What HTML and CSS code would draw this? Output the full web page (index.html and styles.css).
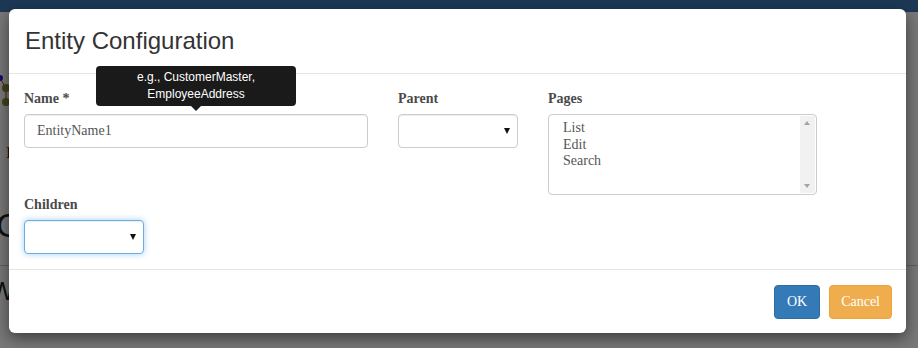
FILE: index.html
```html
<!DOCTYPE html>
<html lang="en">
<head>
    <meta charset="UTF-8">
    <title>Entity Configuration</title>
    <link rel="stylesheet" href="styles.css">
</head>
<body>
    <div class="page">
        <div class="navbar"></div>
        <div class="page-content">
            <svg class="graph" width="20" height="40" viewBox="0 0 20 40">
                <line x1="0" y1="12" x2="6" y2="22" stroke="#c33" stroke-width="1"/>
                <line x1="6" y1="22" x2="6" y2="36" stroke="#c33" stroke-width="1"/>
                <circle cx="0" cy="12" r="3" fill="#22d"/>
                <circle cx="6" cy="22" r="4" fill="#8a8a3a"/>
                <circle cx="6" cy="36" r="4" fill="#8a8a3a"/>
            </svg>
            <p class="bg-letter">I</p>
            <h2 class="bg-heading">C</h2>
            <hr class="bg-rule">
            <h2 class="bg-heading small">W</h2>
        </div>
    </div>

    <div class="backdrop"></div>

    <div class="modal">
        <div class="modal-header">
            <h4 class="modal-title">Entity Configuration</h4>
        </div>

        <div class="modal-body">
            <div class="form-grid">
                <div class="form-group">
                    <label class="control-label">Name *</label>
                    <div class="tooltip-anchor">
                        <input class="form-control" type="text" value="EntityName1">
                        <div class="tooltip">e.g., CustomerMaster,<br>EmployeeAddress</div>
                    </div>
                </div>

                <div class="form-group">
                    <label class="control-label">Parent</label>
                    <div class="select-wrap">
                        <select class="form-control"></select>
                    </div>
                </div>

                <div class="form-group">
                    <label class="control-label">Pages</label>
                    <div class="listbox">
                        <div class="listbox-items">
                            <div>List</div>
                            <div>Edit</div>
                            <div>Search</div>
                        </div>
                        <div class="scrollbar">
                            <span class="arrow-up"></span>
                            <span class="arrow-down"></span>
                        </div>
                    </div>
                </div>

                <div class="form-group">
                    <label class="control-label">Children</label>
                    <div class="select-wrap narrow">
                        <select class="form-control focused"></select>
                    </div>
                </div>
            </div>
        </div>

        <div class="modal-footer">
            <button class="btn btn-primary">OK</button>
            <button class="btn btn-warning">Cancel</button>
        </div>
    </div>
</body>
</html>
```

FILE: styles.css
```css
* {
    margin: 0;
    padding: 0;
    box-sizing: border-box;
}

body {
    width: 918px;
    height: 348px;
    overflow: hidden;
    background: #fff;
    font-family: "Liberation Serif", serif;
    font-size: 14px;
    color: #555;
    position: relative;
}

/* page behind the dialog */
.navbar {
    height: 12px;
    background: #3e78b6;
}

.page-content {
    padding-top: 54px;
}

.graph {
    display: block;
}

.bg-letter {
    font-size: 16px;
    color: #222;
    margin-top: 38px;
    padding-left: 6px;
}

.bg-heading {
    font-family: "Liberation Sans", sans-serif;
    font-weight: 400;
    font-size: 34px;
    color: #222;
    margin-top: 44px;
    margin-left: -4px;
}

.bg-heading.small {
    font-size: 26px;
    margin-top: 10px;
    margin-left: -10px;
}

.bg-rule {
    border: none;
    border-top: 1px solid #ccc;
    margin-top: 20px;
}

.backdrop {
    position: absolute;
    inset: 0;
    background: rgba(0, 0, 0, 0.53);
}

/* dialog */
.modal {
    position: absolute;
    top: 9px;
    left: 9px;
    width: 897px;
    background: #fff;
    border-radius: 6px;
    box-shadow: 0 5px 15px rgba(0, 0, 0, 0.5);
}

.modal-header {
    padding: 15px 16px;
    border-bottom: 1px solid #e5e5e5;
}

.modal-title {
    font-family: "Liberation Sans", sans-serif;
    font-weight: 400;
    font-size: 24px;
    line-height: 34px;
    color: #333;
}

.modal-body {
    padding: 15px;
}

.form-grid {
    display: grid;
    grid-template-columns: 344px 120px 269px;
    grid-template-rows: 106px auto;
    column-gap: 30px;
}

.control-label {
    display: block;
    font-weight: 700;
    line-height: 20px;
    margin-bottom: 5px;
    color: #4a4a4a;
}

.form-control {
    display: block;
    width: 100%;
    height: 34px;
    padding: 6px 12px;
    font-family: "Liberation Serif", serif;
    font-size: 14px;
    color: #555;
    background: #fff;
    border: 1px solid #ccc;
    border-radius: 4px;
    box-shadow: inset 0 1px 1px rgba(0, 0, 0, 0.075);
    outline: none;
    appearance: none;
}

.form-control.focused {
    border-color: #66afe9;
    box-shadow: inset 0 1px 1px rgba(0, 0, 0, 0.075), 0 0 6px rgba(102, 175, 233, 0.6);
}

.select-wrap {
    position: relative;
}

.select-wrap.narrow {
    width: 120px;
}

.select-wrap::after {
    content: "";
    position: absolute;
    right: 8px;
    top: 14px;
    border-left: 3.5px solid transparent;
    border-right: 3.5px solid transparent;
    border-top: 6px solid #111;
}

/* tooltip over the name field */
.tooltip-anchor {
    position: relative;
}

.tooltip {
    position: absolute;
    left: 72px;
    top: -48px;
    width: 200px;
    padding: 3px 8px;
    background: #1a1a1a;
    color: #fff;
    border-radius: 4px;
    font-family: "Liberation Sans", sans-serif;
    font-size: 12px;
    line-height: 17px;
    text-align: center;
}

.tooltip::after {
    content: "";
    position: absolute;
    left: 95px;
    bottom: -5px;
    border-left: 5px solid transparent;
    border-right: 5px solid transparent;
    border-top: 5px solid #1a1a1a;
}

/* pages list */
.listbox {
    display: flex;
    height: 81px;
    border: 1px solid #ccc;
    border-radius: 4px;
    overflow: hidden;
}

.listbox-items {
    flex: 1;
    padding: 5px 14px;
    line-height: 16.5px;
}

.scrollbar {
    width: 15px;
    margin: 1px 1px 1px 0;
    background: #f1f1f1;
    position: relative;
}

.arrow-up,
.arrow-down {
    position: absolute;
    left: 4px;
    border-left: 3.5px solid transparent;
    border-right: 3.5px solid transparent;
}

.arrow-up {
    top: 5px;
    border-bottom: 4px solid #a3a3a3;
}

.arrow-down {
    bottom: 5px;
    border-top: 4px solid #a3a3a3;
}

/* footer */
.modal-footer {
    display: flex;
    justify-content: flex-end;
    gap: 9px;
    padding: 15px 14px 14px;
    border-top: 1px solid #e5e5e5;
}

.btn {
    height: 34px;
    padding: 6px 12px;
    font-family: "Liberation Serif", serif;
    font-size: 14px;
    color: #fff;
    border: 1px solid transparent;
    border-radius: 4px;
}

.btn-primary {
    background: #337ab7;
    border-color: #2e6da4;
}

.btn-warning {
    background: #f0ad4e;
    border-color: #eea236;
    padding: 6px 11px;
}
```
